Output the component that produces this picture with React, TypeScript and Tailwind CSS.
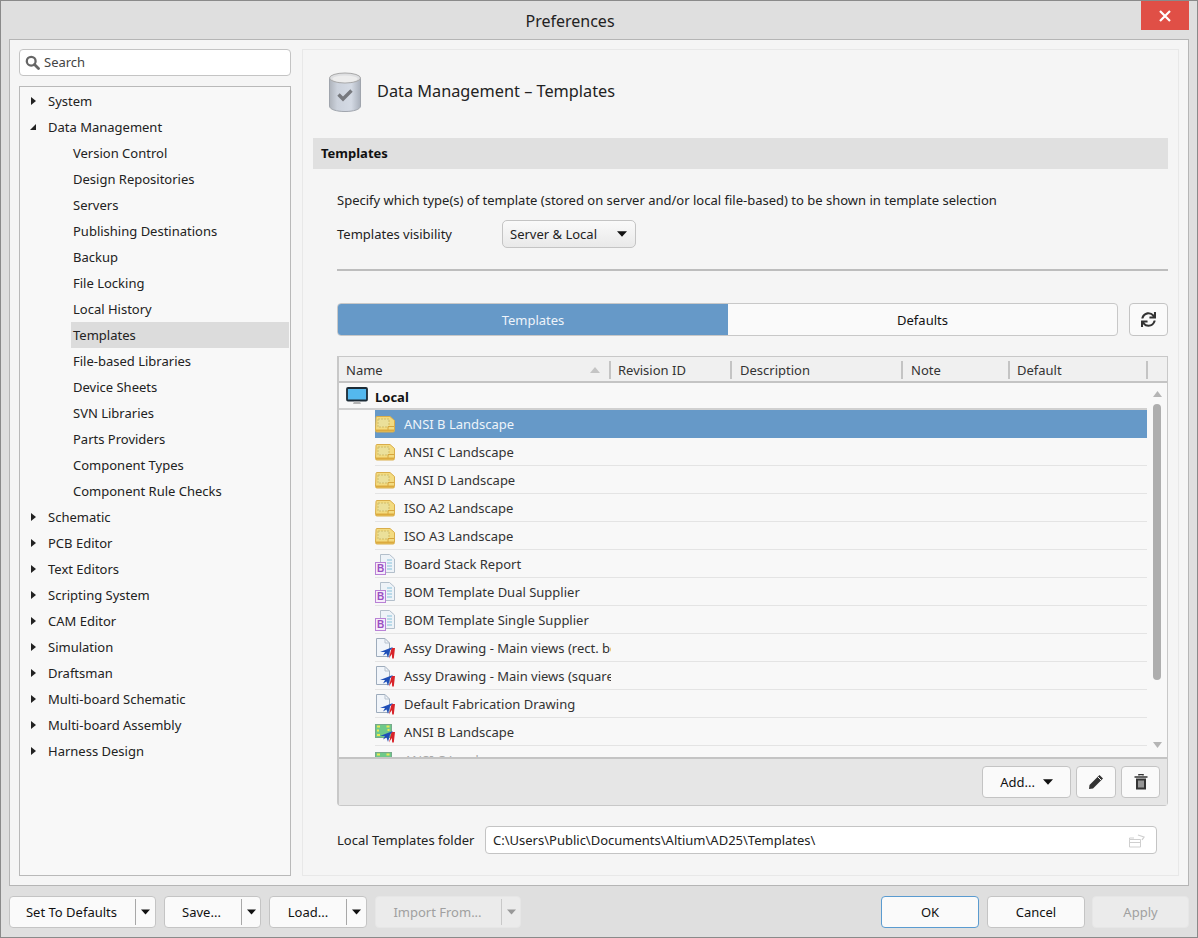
import React from "react";
import { FaSync } from "react-icons/fa";

const tree: [string, number, string?][] = [
  ["System", 0, "r"], ["Data Management", 0, "d"], ["Version Control", 1], ["Design Repositories", 1], ["Servers", 1],
  ["Publishing Destinations", 1], ["Backup", 1], ["File Locking", 1], ["Local History", 1], ["Templates", 2],
  ["File-based Libraries", 1], ["Device Sheets", 1], ["SVN Libraries", 1], ["Parts Providers", 1], ["Component Types", 1],
  ["Component Rule Checks", 1], ["Schematic", 0, "r"], ["PCB Editor", 0, "r"], ["Text Editors", 0, "r"], ["Scripting System", 0, "r"],
  ["CAM Editor", 0, "r"], ["Simulation", 0, "r"], ["Draftsman", 0, "r"], ["Multi-board Schematic", 0, "r"],
  ["Multi-board Assembly", 0, "r"], ["Harness Design", 0, "r"],
];

const rows: [string, string][] = [
  ["ANSI B Landscape", "f"], ["ANSI C Landscape", "f"], ["ANSI D Landscape", "f"], ["ISO A2 Landscape", "f"], ["ISO A3 Landscape", "f"],
  ["Board Stack Report", "b"], ["BOM Template Dual Supplier", "b"], ["BOM Template Single Supplier", "b"],
  ["Assy Drawing - Main views (rect. border)", "d"], ["Assy Drawing - Main views (square border)", "d"],
  ["Default Fabrication Drawing", "d"], ["ANSI B Landscape", "g"], ["ANSI C Landscape", "g"],
];

const Arrow = ({ color = "#111", w = 11 }: { color?: string; w?: number }) => (
  <svg width={w} height="6" viewBox="0 0 11 6" className="shrink-0"><path d="M0 0H11L5.5 6Z" fill={color} /></svg>
);

function RowIcon({ kind }: { kind: string }) {
  if (kind === "f")
    return (
      <svg width="20" height="17" viewBox="0 0 20 17" className="shrink-0">
        <path d="M1 1.5Q1 .5 2 .5H15L19.5 4.5V14.5Q19.5 16 18 16H2Q.5 16 .5 14.5Z" fill="#f3db80" stroke="#d9ad4a" />
        <path d="M3 3H14V11H3Z" fill="#ebe09a" stroke="#cfbc6a" strokeDasharray="2 1" />
        <path d="M13 14V10.5H19" fill="none" stroke="#d6a63e" />
        <path d="M1 14.5H19" stroke="#dcaa3e" strokeWidth="2" />
      </svg>
    );
  if (kind === "b")
    return (
      <svg width="20" height="21" viewBox="0 0 20 21" className="shrink-0">
        <path d="M5.5 .5H14.5L19.5 5V18.5H5.5Z" fill="#eef3f8" stroke="#b3bfcb" />
        <path d="M12 6H17M12 9H17M12 12H17M12 15H17" stroke="#a9d2e4" strokeWidth="1.4" />
        <rect x=".5" y="8.5" width="10" height="12" fill="#f6ecfa" stroke="#b982d6" />
        <text x="5.5" y="18" fontSize="10" fontWeight="700" textAnchor="middle" fill="#9a4fc2" fontFamily="'Liberation Sans',sans-serif">B</text>
      </svg>
    );
  const mark = (
    <>
      <path d="M14 20.5L16.5 10H20L18.8 20.5H17.2L16.8 16Z" fill="#d8242a" />
      <path d="M5 14L14 10.5L18 9L15 12.5L13 20L11.5 15.5L8 17.5L10 14Z" fill="#1f4fb8" />
    </>
  );
  if (kind === "d")
    return (
      <svg width="20" height="21" viewBox="0 0 20 21" className="shrink-0">
        <path d="M1.5 .5H10L14.5 5V18.5H1.5Z" fill="#f1f5fa" stroke="#9eacbc" />
        <path d="M10 .5V5H14.5" fill="none" stroke="#b8c3cf" />
        {mark}
      </svg>
    );
  return (
    <svg width="20" height="21" viewBox="0 0 20 21" className="shrink-0">
      <rect x=".5" y="2.5" width="16" height="13" fill="#6ec98a" stroke="#76a98a" />
      <path d="M2 4.5H5M14.5 4.5H11.5M2 8.5H4M14.5 8H12.5M2 13H5" stroke="#e9ea55" strokeWidth="2" fill="none" />
      {mark}
    </svg>
  );
}

const Btn = ({ className = "", children }: { className?: string; children: React.ReactNode }) => (
  <div className={"flex items-center justify-center rounded-[4px] border border-[#c4c4c4] bg-[#fafafa] text-[#111] " + className}>{children}</div>
);

function SplitBtn({ label, w, div, disabled }: { label: string; w: string; div: string; disabled?: boolean }) {
  return (
    <div className={"flex h-[32px] items-center rounded-[4px] border " + w + " " + (disabled ? "border-[#e6e6e6] bg-[#ebebeb] text-[#a0a0a0]" : "border-[#c4c4c4] bg-[#fafafa] text-[#111]")}>
      <div className={"flex justify-center pt-px " + div}>{label}</div>
      <div className={"h-[26px] w-px " + (disabled ? "bg-[#c8c8c8]" : "bg-[#a8a8a8]")} />
      <div className="flex flex-1 justify-center"><Arrow w={9} color={disabled ? "#999" : "#111"} /></div>
    </div>
  );
}

export default function App() {
  return (
    <div className="flex h-[938px] w-[1198px] flex-col overflow-hidden border border-[#8a8a8a] bg-[#dfdfdf] font-['Noto_Sans','Open_Sans',sans-serif] text-[13px] text-[#222]">
      <div className="flex h-[38px] shrink-0 items-start">
        <div className="flex h-[38px] flex-1 items-center justify-center pr-[2px] pt-[2px] text-[16px] text-[#222]">Preferences</div>
        <div className="mr-[8px] flex h-[29px] w-[48px] items-center justify-center bg-[#e04f46]">
          <svg width="12" height="12" viewBox="0 0 12 12"><path d="M1 1L11 11M11 1L1 11" stroke="#fff" strokeWidth="2.2" /></svg>
        </div>
      </div>

      <div className="mx-[8px] flex h-[847px] shrink-0 gap-[11px] border border-[#b5b5b5] bg-[#f5f5f5] p-[9px]">
        {/* left */}
        <div className="flex w-[272px] shrink-0 flex-col gap-[10px]">
          <div className="flex h-[27px] items-center gap-[4px] rounded-[4px] border border-[#c4c4c4] bg-white pl-[5px] text-[#444]">
            <svg width="15" height="15" viewBox="0 0 15 15"><circle cx="6.2" cy="6.2" r="4.4" fill="none" stroke="#666" strokeWidth="2.3" /><path d="M9.5 9.5L13.5 13.5" stroke="#666" strokeWidth="2.8" strokeLinecap="round" /></svg>
            <span>Search</span>
          </div>
          <div className="flex-1 border border-[#b9b9b9] bg-[#f8f8f8] pt-px">
            {tree.map(([t, level, arrow]) => (
              <div key={t} className="flex h-[26px] items-center">
                <div className="flex w-[28px] shrink-0 justify-end pr-[12px]">
                  {arrow === "r" && <svg width="5" height="8" viewBox="0 0 5 8"><path d="M0 0L5 4L0 8Z" fill="#222" /></svg>}
                  {arrow === "d" && <svg width="6" height="6" viewBox="0 0 6 6"><path d="M6 0V6H0Z" fill="#222" /></svg>}
                </div>
                {level === 0 ? (
                  <span className="pt-[2px]">{t}</span>
                ) : (
                  <div className={"ml-[23px] flex h-[26px] flex-1 items-center pl-[2px] pt-[2px] mr-px " + (level === 2 ? "bg-[#dcdcdc]" : "")}>{t}</div>
                )}
              </div>
            ))}
          </div>
        </div>

        {/* right */}
        <div className="flex w-[877px] shrink-0 flex-col border border-[#e8e8e8] px-[10px]">
          <div className="flex h-[88px] shrink-0 items-start pl-[16px] pt-[22px]">
            <svg width="32" height="40" viewBox="0 0 32 40" className="shrink-0">
              <defs>
                <linearGradient id="cyl" x1="0" x2="1" y1="0" y2="0"><stop offset="0" stopColor="#aeb3bb" /><stop offset=".25" stopColor="#ccd2dc" /><stop offset=".7" stopColor="#d4dae4" /><stop offset="1" stopColor="#a8afba" /></linearGradient>
              </defs>
              <path d="M.5 6V34C.5 37.5 7.5 39.5 16 39.5S31.5 37.5 31.5 34V6Z" fill="url(#cyl)" stroke="#a0a5ad" />
              <ellipse cx="16" cy="6" rx="15.5" ry="5" fill="#dedfe1" stroke="#a8a8a8" />
              <ellipse cx="16" cy="6.8" rx="12.5" ry="3.4" fill="#ededed" />
              <path d="M9.5 22.5L14 27L22.5 18.5" fill="none" stroke="#77797e" strokeWidth="3.4" />
            </svg>
            <div className="ml-[16px] mt-[7px] text-[16.3px] leading-[24px] text-[#222]">Data Management – Templates</div>
          </div>
          <div className="flex h-[31px] shrink-0 items-center bg-[#e0e0e0] pl-[8px] font-bold text-[#111]">Templates</div>

          <div className="flex flex-1 flex-col pl-[24px]">
            <div className="mt-[21px] leading-[20px]">Specify which type(s) of template (stored on server and/or local file-based) to be shown in template selection</div>
            <div className="mt-[10px] flex h-[28px] items-center">
              <div className="w-[165px] pt-[2px]">Templates visibility</div>
              <div className="flex h-[28px] w-[134px] items-center justify-between rounded-[5px] border border-[#c4c4c4] bg-gradient-to-b from-[#fafafa] to-[#e9e9e9] px-[7px] pr-[8px]">
                <span className="pt-[2px]">Server &amp; Local</span><Arrow w={10} />
              </div>
            </div>
            <div className="mt-[21px] h-[2px] shrink-0 bg-[#bdbdbd]" />
            <div className="mt-[32px] flex h-[33px] gap-[11px]">
              <div className="flex flex-1 overflow-hidden rounded-[4px] border border-[#c8c8c8] bg-[#fafafa]">
                <div className="flex w-[390px] items-center justify-center bg-[#6699c8] pt-[2px] text-[#eef4fa]">Templates</div>
                <div className="flex flex-1 items-center justify-center pt-[2px] text-[#111]">Defaults</div>
              </div>
              <Btn className="w-[39px]">
                <FaSync size={15} color="#333" />
              </Btn>
            </div>

            <div className="mt-[20px] flex h-[450px] flex-col rounded-b-[4px] border border-[#c8c8c8] border-l-2">
              <div className="flex h-[26px] shrink-0 items-center border-b-2 border-[#c4c4c4] bg-[#f0f0f0] pt-[2px] text-[#333]">
                <div className="flex w-[272px] shrink-0 items-center justify-between border-r-2 border-[#c4c4c4] pl-[7px] pr-[9px] leading-[18px]">
                  <span>Name</span>
                  <svg width="10" height="6" viewBox="0 0 10 6"><path d="M0 6L5 0L10 6Z" fill="#c4c4c4" /></svg>
                </div>
                <div className="w-[121px] shrink-0 border-r-2 border-[#c4c4c4] pl-[7px] leading-[18px]">Revision ID</div>
                <div className="w-[171px] shrink-0 border-r-2 border-[#c4c4c4] pl-[8px] leading-[18px]">Description</div>
                <div className="w-[107px] shrink-0 border-r-2 border-[#c4c4c4] pl-[8px] leading-[18px]">Note</div>
                <div className="w-[138px] shrink-0 border-r-2 border-[#c4c4c4] pl-[7px] leading-[18px]">Default</div>
              </div>
              <div className="flex min-h-0 flex-1 overflow-hidden bg-[#f8f8f8]">
                <div className="min-w-0 flex-1 overflow-hidden">
                  <div className="flex h-[27px] items-center border-b-2 border-[#d0d0d0] pl-[7px] font-bold text-[#111]">
                    <svg width="22" height="18" viewBox="0 0 22 18" className="shrink-0">
                      <rect x="1" y="1" width="20" height="12.5" rx="1" fill="#54b8ee" stroke="#1c2b36" strokeWidth="1.8" />
                      <path d="M8 14.5H14L15 17H7Z" fill="#b4b4b4" />
                    </svg>
                    <span className="ml-[7px] pt-[4px]">Local</span>
                  </div>
                  {rows.map(([t, k], i) => (
                    <div key={i} className={"ml-[36px] flex h-[28px] shrink-0 items-center " + (i === 0 ? "bg-[#6699c8] text-[#eef4fa]" : "border-b border-[#e4e4e4] pt-px text-[#333]")}>
                      <div className="flex w-[20px] shrink-0 justify-center"><RowIcon kind={k} /></div>
                      <div className={"ml-[9px] w-[207px] overflow-hidden whitespace-nowrap pt-[2px] " + (i === 12 ? "text-[#aaa]" : "")}>{t}</div>
                    </div>
                  ))}
                </div>
                <div className="flex w-[20px] shrink-0 flex-col items-center pt-[8px]">
                  <svg width="9" height="6" viewBox="0 0 9 6"><path d="M0 6L4.5 0L9 6Z" fill="#b5b5b5" /></svg>
                  <div className="mt-[7px] h-[276px] w-[8px] rounded-[4px] bg-[#aeaeae]" />
                  <div className="mt-auto mb-[9px]"><svg width="9" height="6" viewBox="0 0 9 6"><path d="M0 0L4.5 6L9 0Z" fill="#b5b5b5" /></svg></div>
                </div>
              </div>
              <div className="flex h-[48px] shrink-0 items-center justify-end gap-[5px] border-t-2 border-[#c4c4c4] bg-[#e6e6e6] pr-[7px]">
                <Btn className="h-[32px] w-[89px] gap-[8px]"><span className="pt-[2px]">Add...</span><Arrow w={10} /></Btn>
                <Btn className="h-[32px] w-[40px]">
                  <svg width="16" height="16" viewBox="0 0 16 16"><path d="M11.5 1L15 4.5L5 14.5L1 15L1.5 11Z" fill="#333" /><path d="M10 3L13 6" stroke="#fafafa" strokeWidth="1" /></svg>
                </Btn>
                <Btn className="h-[32px] w-[39px]">
                  <svg width="14" height="16" viewBox="0 0 14 16"><path d="M5 1.5V.5H9V1.5M0.5 3H13.5" stroke="#333" strokeWidth="1.6" fill="none" /><path d="M2 4.5H12V15.5H2Z" fill="#333" /><path d="M5 6.5V13.5M7 6.5V13.5M9 6.5V13.5" stroke="#fafafa" strokeWidth="1" /></svg>
                </Btn>
              </div>
            </div>

            <div className="mt-[20px] flex h-[28px] items-center pr-[11px]">
              <div className="w-[148px] shrink-0 pt-[2px]">Local Templates folder</div>
              <div className="flex h-[28px] flex-1 items-center justify-between rounded-[4px] border border-[#c4c4c4] bg-white pl-[7px] pr-[10px]">
                <span className="pt-[2px]">C:\Users\Public\Documents\Altium\AD25\Templates\</span>
                <svg width="18" height="15" viewBox="0 0 18 15" fill="none" stroke="#cfcfcf"><path d="M1.5 6.5H12.5V14H1.5Z" /><path d="M1.5 9.5H12.5M1.5 6.5V5H6" /><path d="M10 2L16 4L14 7" strokeWidth="1.3" /></svg>
              </div>
            </div>
          </div>
        </div>
      </div>

      <div className="flex flex-1 items-start px-[8px] pt-[10px] text-[13px]">
        <div className="flex gap-[8px]">
          <SplitBtn label="Set To Defaults" w="w-[147px]" div="w-[125px] pr-[2px]" />
          <SplitBtn label="Save..." w="w-[97px]" div="w-[76px] pr-[3px]" />
          <SplitBtn label="Load..." w="w-[98px]" div="w-[76px]" />
          <SplitBtn label="Import From..." w="w-[146px]" div="w-[125px] pr-[2px]" disabled />
        </div>
        <div className="ml-auto flex">
          <Btn className="h-[32px] w-[98px] !border-[#5a9bd0] pt-[2px]">OK</Btn>
          <Btn className="ml-[8px] h-[32px] w-[98px] pt-[2px]">Cancel</Btn>
          <div className="ml-[7px] flex h-[32px] w-[97px] items-center justify-center rounded-[4px] border border-[#e6e6e6] bg-[#ebebeb] pt-[2px] text-[#a0a0a0]">Apply</div>
        </div>
      </div>
    </div>
  );
}
